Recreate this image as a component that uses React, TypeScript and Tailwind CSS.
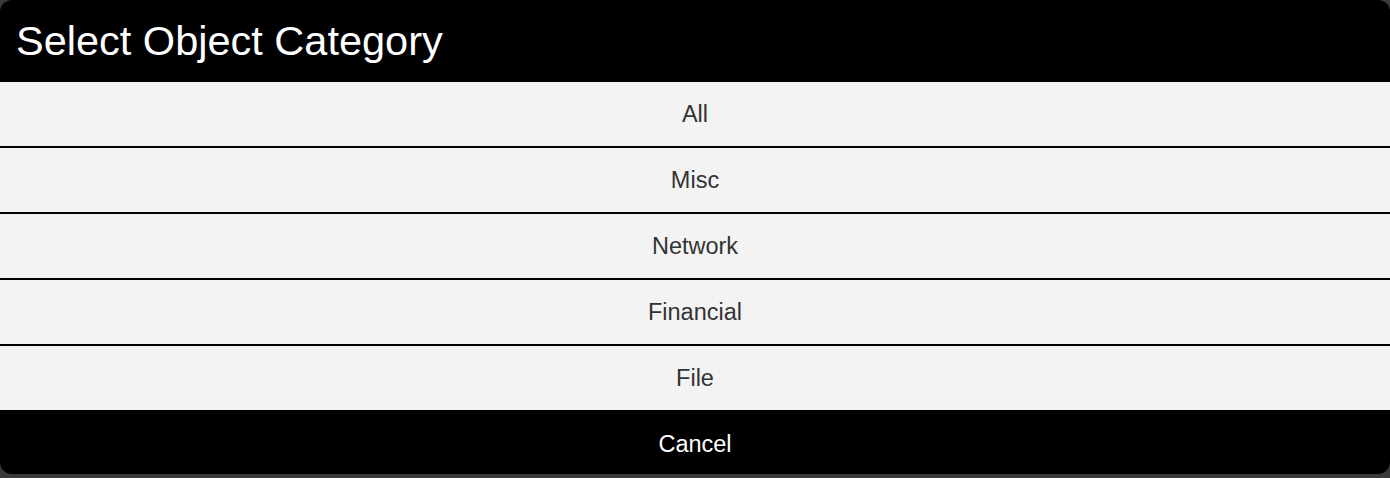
import React from "react";

const items = ["All", "Misc", "Network", "Financial", "File"];

export default function App() {
  return (
    <div
      className="w-[1390px] h-[478px] bg-[#3a3a3a] overflow-hidden"
      style={{ fontFamily: '"Liberation Sans", Arial, sans-serif' }}
    >
      <div className="w-full h-[474px] bg-black rounded-[12px] overflow-hidden flex flex-col">
        <div className="h-[82px] flex items-center pl-4 text-white text-[41.5px] leading-none">
          Select Object Category
        </div>
        {items.map((it, i) => (
          <div
            key={it}
            className={
              i < items.length - 1
                ? "h-[66px] bg-[#f3f3f3] border-b-2 border-black flex items-center justify-center pt-[1px] text-[#333333] text-[23.5px]"
                : "h-[64px] bg-[#f3f3f3] flex items-center justify-center pt-[1px] text-[#333333] text-[23.5px]"
            }
          >
            {it}
          </div>
        ))}
        <div className="h-[64px] flex items-center justify-center pt-[6px] text-white text-[23.5px]">
          Cancel
        </div>
      </div>
    </div>
  );
}
